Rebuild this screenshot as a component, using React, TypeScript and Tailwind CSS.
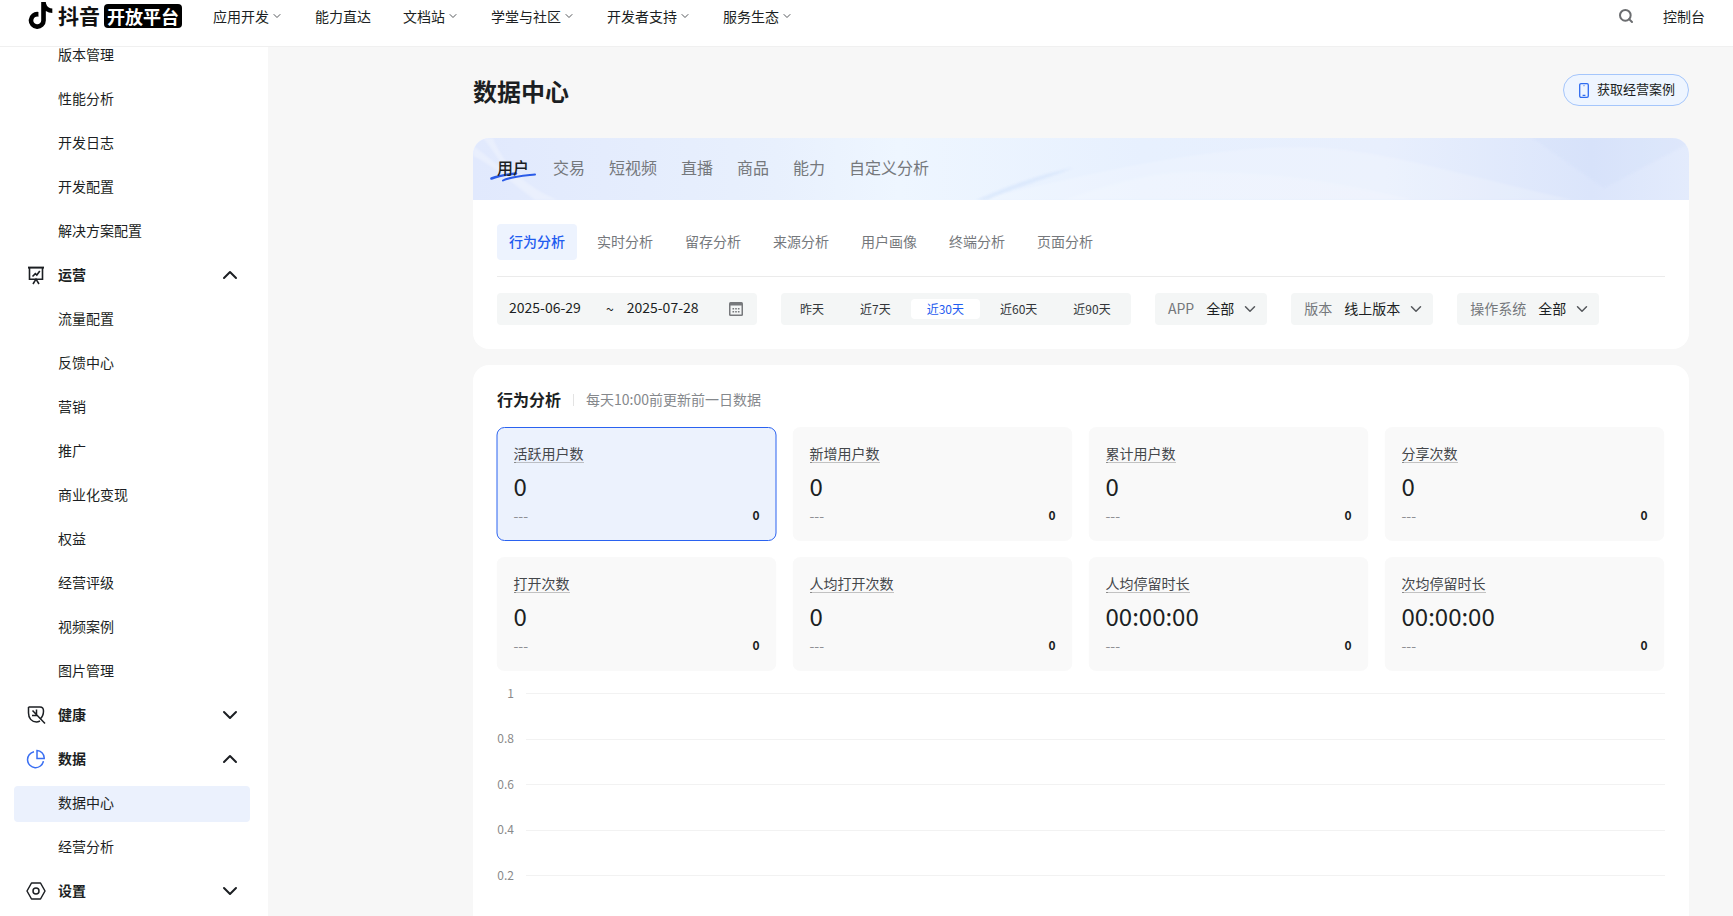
import React from "react";
import { ChevronDown, ChevronUp, Search } from "lucide-react";
import { FaTiktok } from "react-icons/fa6";

const navItems: [string, boolean][] = [
  ["应用开发", true],
  ["能力直达", false],
  ["文档站", true],
  ["学堂与社区", true],
  ["开发者支持", true],
  ["服务生态", true],
];

function Sub({ label, active }: { label: string; active?: boolean }) {
  return (
    <div className="h-[44px] px-[14px] py-1">
      <div className={`h-9 w-[236px] rounded pl-[44px] pb-[4px] flex items-center text-sm text-[#1c1f23] ${active ? "bg-[#ebf1fd]" : ""}`}>
        {label}
      </div>
    </div>
  );
}

function Group({ label, open, icon }: { label: string; open?: boolean; icon: React.ReactNode }) {
  return (
    <div className="h-[44px] pl-[26px] pr-[26px] pb-[2px] flex items-center gap-3 text-sm font-bold text-[#1c1f23]">
      <span className="w-5 h-5 shrink-0">{icon}</span>
      <span className="flex-1 -mt-[3px]">{label}</span>
      {open ? <ChevronUp size={24} strokeWidth={2} /> : <ChevronDown size={24} strokeWidth={2} />}
    </div>
  );
}

const IconOps = (
  <svg viewBox="0 0 20 20" width="20" height="20" fill="none" stroke="#1c1f23" strokeWidth="1.6">
    <path d="M2 2.6h16" strokeWidth="2" />
    <path d="M3.5 2.6v11.6h13V2.6" />
    <path d="M6.5 11.5l2.8-2.8 1.5 1.3 3-4" />
    <path d="M7 19l3-4.8 3 4.8" />
  </svg>
);
const IconHealth = (
  <svg viewBox="0 0 20 20" width="20" height="20" fill="none" stroke="#1c1f23" strokeWidth="1.5" strokeLinejoin="round">
    <path d="M2.5 2h11.5c2.5 0 3.5 2 3.5 4 0 3-1 6-3.5 8M2.5 2v6c0 5 3 9 8 9 1.5 0 2.5-.5 3.5-1" />
    <path d="M6.5 5.5L19 18.5M10.5 4.5v5M6 10.5h5.5" />
  </svg>
);
const IconData = (
  <svg viewBox="0 0 20 20" width="20" height="20" fill="none" stroke="#3a6ff2" strokeWidth="1.5">
    <path d="M8 2.8a8 8 0 1 0 9.4 9.4" />
    <path d="M11 1.5a7.5 7.5 0 0 1 7.2 7.2V9.5H11z" />
  </svg>
);
const IconSet = (
  <svg viewBox="0 0 20 20" width="20" height="20" fill="none" stroke="#1c1f23" strokeWidth="1.5" strokeLinejoin="round">
    <path d="M5.5 2h9l4.5 8-4.5 8h-9L1 10z" />
    <circle cx="10" cy="10" r="3" />
  </svg>
);

function Metric({ title, value, active }: { title: string; value: string; active?: boolean }) {
  return (
    <div className={`h-[114px] rounded-lg border px-4 pt-[14px] ${active ? "bg-[#ecf2fd] border-[#2a62f0]" : "bg-[#f9f9f9] border-transparent"}`}>
      <div className="h-[22px] flex items-center">
        <span className="text-sm leading-[18px] text-[#44474b] border-b border-dotted border-[#8a8a8a]">{title}</span>
      </div>
      <div className="mt-[6px] text-2xl leading-8 text-[#1c1f23]">{value}</div>
      <div className="mt-[3px] h-5 flex items-center justify-between">
        <span className="text-sm text-[#8f9094]">---</span>
        <span className="text-xs font-bold text-[#1c1f23]">0</span>
      </div>
    </div>
  );
}

function Select({ label, value }: { label: string; value: string }) {
  return (
    <div className="h-8 rounded-sm bg-[#f4f6f6] pl-[13px] pr-2 flex items-center text-sm">
      <span className="text-[#75787c] -mt-[2px]">{label}</span>
      <span className="ml-3 text-[#1c1f23] -mt-[2px]">{value}</span>
      <ChevronDown className="ml-[7px] text-[#55585c]" size={18} strokeWidth={2} />
    </div>
  );
}

export default function App() {
  const tabs = ["交易", "短视频", "直播", "商品", "能力", "自定义分析"];
  const subTabs = ["实时分析", "留存分析", "来源分析", "用户画像", "终端分析", "页面分析"];
  const presets = ["昨天", "近7天", "近30天", "近60天", "近90天"];
  const metrics = [
    ["活跃用户数", "0"],
    ["新增用户数", "0"],
    ["累计用户数", "0"],
    ["分享次数", "0"],
    ["打开次数", "0"],
    ["人均打开次数", "0"],
    ["人均停留时长", "00:00:00"],
    ["次均停留时长", "00:00:00"],
  ];
  return (
    <div className="w-full h-[916px] overflow-hidden flex flex-col bg-[#f7f7f7] font-['Noto_Sans_CJK_SC','Liberation_Sans',sans-serif]">
      <header className="h-[47px] shrink-0 bg-white border-b border-[#f0f0f0] pl-7 pr-7 pb-[15px] flex items-center text-sm text-[#1c1f23]">
        <div className="flex items-center">
          <FaTiktok className="w-[25px] h-[27px] text-black" />
          <span className="ml-[5px] text-[21px] font-bold leading-none text-[#111]">抖音</span>
          <span className="ml-1 h-6 w-[78px] rounded bg-black text-white text-[18px] font-bold leading-6 text-center">开放平台</span>
        </div>
        <nav className="ml-8 -translate-x-px flex items-center gap-8 flex-1">
          {navItems.map(([t, c]) => (
            <span key={t} className="flex items-center">
              {t}
              {c && <ChevronDown size={12} strokeWidth={2} className="ml-[2px] text-[#55585c]" />}
            </span>
          ))}
        </nav>
        <Search size={16} strokeWidth={3} className="text-[#6b6d70]" />
        <span className="ml-[29px]">控制台</span>
      </header>
      <div className="flex flex-1 min-h-0">
        <aside className="w-[268px] shrink-0 bg-white overflow-hidden">
          <div className="-mt-[13px]">
            <Sub label="版本管理" />
            <Sub label="性能分析" />
            <Sub label="开发日志" />
            <Sub label="开发配置" />
            <Sub label="解决方案配置" />
            <Group label="运营" open icon={IconOps} />
            <Sub label="流量配置" />
            <Sub label="反馈中心" />
            <Sub label="营销" />
            <Sub label="推广" />
            <Sub label="商业化变现" />
            <Sub label="权益" />
            <Sub label="经营评级" />
            <Sub label="视频案例" />
            <Sub label="图片管理" />
            <Group label="健康" icon={IconHealth} />
            <Group label="数据" open icon={IconData} />
            <Sub label="数据中心" active />
            <Sub label="经营分析" />
            <Group label="设置" icon={IconSet} />
          </div>
        </aside>
        <main className="flex-1 min-w-0 pl-[205px] pr-11 pt-[27px] overflow-hidden">
          <div className="h-9 mb-7 flex items-start justify-between">
            <h1 className="text-2xl leading-9 font-bold text-[#1c1f23] -mt-px">数据中心</h1>
            <button className="h-8 w-[126px] rounded-full border border-[#a5c6fb] bg-[#eef5ff] pl-[15px] flex items-center gap-2 text-[13px] text-[#1c1f23]">
              <svg viewBox="0 0 10 15" width="10" height="15" fill="none" stroke="#2f6bf0" strokeWidth="1.3">
                <rect x="0.7" y="0.7" width="8.6" height="13.6" rx="1.3" />
                <path d="M3.6 12.4h2.8M4.6 2.6h.8" />
              </svg>
              <span className="-mt-[2px]">获取经营案例</span>
            </button>
          </div>

          <section className="rounded-2xl bg-white overflow-hidden">
            <div className="relative h-[62px] overflow-hidden bg-[linear-gradient(90deg,#e1e9fd_0%,#e8f0fd_25%,#eef6ff_35%,#e7f0fe_55%,#e8effd_75%,#dbe5fb_92%,#e3ebfc_100%)]">
              <svg className="absolute inset-0 w-full h-full blur-[1px]" viewBox="0 0 1216 62" preserveAspectRatio="none" fill="none">
                <path d="M20 0C30 25 50 48 85 62H62C42 48 22 28 0 18V8C10 14 20 24 35 35C25 20 18 10 10 0Z" fill="#ffffff" fillOpacity="0.28" />
                <path d="M503 62C600 40 720 9 825 9C900 9 960 30 1100 62Z" fill="#ffffff" fillOpacity="0.18" />
                <path d="M590 62C640 45 680 34 720 34C790 34 850 40 940 62Z" fill="#ffffff" fillOpacity="0.14" />
                <path d="M503 62C530 50 570 35 600 30C570 42 530 54 515 62Z" fill="#c9dcfa" fillOpacity="0.4" />
                <path d="M1060 0L1131 50L1216 5V0Z" fill="#c9d8fa" fillOpacity="0.18" />
              </svg>
              <div className="relative h-full pl-6 pb-1 flex items-center gap-6 text-base text-[#75787c]">
                <span className="relative font-medium text-[#1c1f23]">
                  <svg className="absolute left-[-7px] top-4" width="46" height="11" viewBox="0 0 46 11" fill="none" strokeLinecap="round">
                    <path d="M1.5 7.5C8 5 17 3.5 26 2.5" stroke="#2a5be8" strokeWidth="2.6" />
                    <path d="M13 9.5C19 6 32 5 45 3.5" stroke="#2a5be8" strokeWidth="2" />
                  </svg>
                  <span className="relative">用户</span>
                </span>
                {tabs.map((t) => (
                  <span key={t}>{t}</span>
                ))}
              </div>
            </div>
            <div className="px-6 pt-6 pb-6">
              <div className="flex items-center gap-2 text-sm text-[#75787c]">
                <span className="h-9 px-3 pb-[2px] rounded-sm bg-[#edf3fe] font-medium text-[#1f5cf0] flex items-center">行为分析</span>
                {subTabs.map((t) => (
                  <span key={t} className="h-9 px-3 pb-[2px] flex items-center">
                    {t}
                  </span>
                ))}
              </div>
              <div className="mt-4 h-px bg-[#ebebeb]" />
              <div className="mt-4 flex items-center gap-6">
                <div className="h-8 w-[260px] rounded-sm bg-[#f4f6f6] pl-3 pr-[14px] flex items-center text-sm text-[#1c1f23]">
                  <span className="-mt-[4px]">2025-06-29</span>
                  <span className="ml-[25px]">~</span>
                  <span className="ml-[13px] -mt-[4px]">2025-07-28</span>
                  <svg className="ml-auto" viewBox="0 0 14 14" width="14" height="14">
                    <rect x="0" y="0" width="14" height="14" rx="1.5" fill="#77797c" />
                    <rect x="1.5" y="3.5" width="11" height="9" fill="#f4f6f6" />
                    <path d="M3.5 6h1.6v1.6H3.5zM6.2 6h1.6v1.6H6.2zM8.9 6h1.6v1.6H8.9zM3.5 9h1.6v1.6H3.5zM6.2 9h1.6v1.6H6.2zM8.9 9h1.6v1.6H8.9z" fill="#77797c" />
                  </svg>
                </div>
                <div className="h-8 w-[350px] rounded-sm bg-[#f4f6f6] pl-[3px] pr-1 flex items-center gap-1 text-xs text-[#33363a] whitespace-nowrap">
                  {presets.map((p) => (
                    <span
                      key={p}
                      className={`h-5 px-4 shrink-0 rounded-sm flex items-center ${p === "近30天" ? "bg-white text-[#1f5cf0]" : ""}`}
                    >
                      {p}
                    </span>
                  ))}
                </div>
                <Select label="APP" value="全部" />
                <Select label="版本" value="线上版本" />
                <Select label="操作系统" value="全部" />
              </div>
            </div>
          </section>

          <section className="mt-4 rounded-t-2xl bg-white px-6 pt-[23px] h-[600px]">
            <div className="h-6 mb-[15px] flex items-center">
              <span className="text-base font-bold text-[#1c1f23] -mt-[2px]">行为分析</span>
              <span className="mx-3 h-3 w-px bg-[#e3e3e3]" />
              <span className="text-sm text-[#85888c] -mt-[2px]">每天10:00前更新前一日数据</span>
            </div>
            <div className="grid grid-cols-4 gap-4 -translate-x-[0.5px]">
              {metrics.map(([t, v], i) => (
                <Metric key={t} title={t} value={v} active={i === 0} />
              ))}
            </div>
            <div>
              {["1", "0.8", "0.6", "0.4", "0.2"].map((l) => (
                <div key={l} className="h-[45.5px] flex items-center">
                  <span className="w-[17px] text-xs text-[#8a8a8a] text-right -mt-[2px]">{l}</span>
                  <span className="ml-3 flex-1 h-px bg-[#f2f2f2]" />
                </div>
              ))}
            </div>
          </section>
        </main>
      </div>
    </div>
  );
}
